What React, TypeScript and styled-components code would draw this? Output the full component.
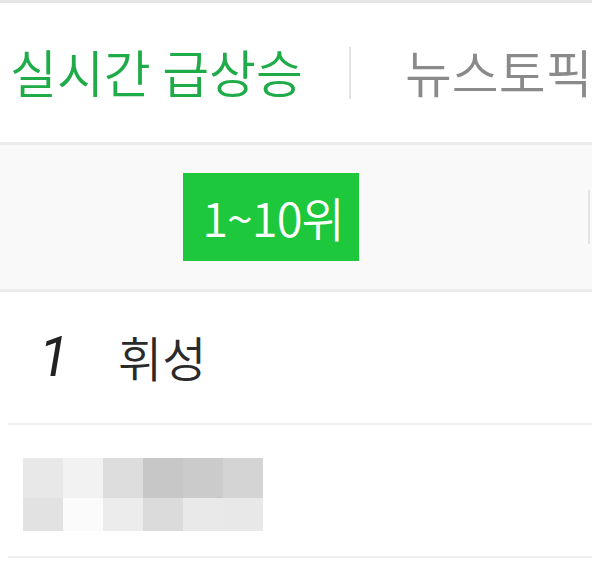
import React from "react"
import styled, { createGlobalStyle } from "styled-components"

const GlobalStyle = createGlobalStyle`
    body {
        margin: 0;
        background: #ffffff;
        font-family: "Noto Sans CJK KR", "Noto Sans", sans-serif;
    }
`

// 가려진 검색어 모자이크 색
const mosaic = [
    ["#e8e8e8", "#f2f2f2", "#dddddd", "#c7c7c7", "#cbcbcb", "#d4d4d4"],
    ["#e2e2e2", "#fbfbfb", "#ececec", "#dbdbdb", "#e9e9e9", "#e8e8e8"]
]

const Page = styled.div`
    width: 592px;
    height: 572px;
    overflow: hidden;
    border-top: 3px solid #e6e6e6;
    box-sizing: border-box;
`

const TabBar = styled.div`
    display: flex;
    align-items: center;
    height: 139px;
    padding-left: 10px;
    border-bottom: 3px solid #ececec;
    white-space: nowrap;
    overflow: hidden;
`

const Tab = styled.div<{ $active?: boolean }>`
    font-size: 51px;
    font-weight: 350;
    line-height: 1;
    color: ${p => (p.$active ? "#1fab48" : "#8a8a8a")};
    flex-shrink: 0;
    padding-bottom: 2px;
`

const TabDivider = styled.div`
    width: 2px;
    height: 52px;
    background: #e2e2e2;
    margin: 0 54px 0 46px;
    flex-shrink: 0;
`

const RangeBar = styled.div`
    display: flex;
    align-items: center;
    height: 144px;
    background: #f9f9f9;
    border-bottom: 3px solid #ececec;
    padding-left: 183px;
    padding-right: 2px;
`

const RangeButton = styled.div`
    width: 176px;
    height: 88px;
    background: #1ec83c;
    color: #ffffff;
    font-size: 47px;
    font-weight: 350;
    line-height: 1;
    letter-spacing: -1px;
    display: flex;
    align-items: center;
    justify-content: center;
    padding-bottom: 2px;
    padding-left: 4px;
    box-sizing: border-box;
`

const RangeDivider = styled.div`
    width: 2px;
    height: 54px;
    background: #e4e4e4;
    margin-left: auto;
`

const Row = styled.div`
    display: flex;
    align-items: center;
    height: 131px;
    margin-left: 8px;
    border-bottom: 2px solid #eeeeee;
`

const Rank = styled.div`
    width: 110px;
    padding-left: 31px;
    box-sizing: border-box;
    font-family: "Roboto", "Liberation Sans", sans-serif;
    font-style: italic;
    font-weight: 400;
    font-size: 55px;
    line-height: 1;
    color: #222222;
`

const Keyword = styled.div`
    font-size: 48px;
    font-weight: 350;
    line-height: 1;
    color: #2a2a2a;
    padding-bottom: 4px;
`

const Mosaic = styled.div`
    display: grid;
    grid-template-columns: repeat(6, 40px);
    grid-template-rows: 40px 33px;
    margin-left: 15px;
    margin-top: 8px;
`

const Cell = styled.div<{ $color: string }>`
    background: ${p => p.$color};
`

export default function App() {
    return (
        <Page>
            <GlobalStyle />
            <TabBar>
                <Tab $active>실시간 급상승</Tab>
                <TabDivider />
                <Tab>뉴스토픽</Tab>
            </TabBar>
            <RangeBar>
                <RangeButton>1~10위</RangeButton>
                <RangeDivider />
            </RangeBar>
            <Row>
                <Rank>1</Rank>
                <Keyword>휘성</Keyword>
            </Row>
            <Row>
                <Mosaic>
                    {mosaic.flat().map((c, i) => (
                        <Cell key={i} $color={c} />
                    ))}
                </Mosaic>
            </Row>
        </Page>
    )
}
